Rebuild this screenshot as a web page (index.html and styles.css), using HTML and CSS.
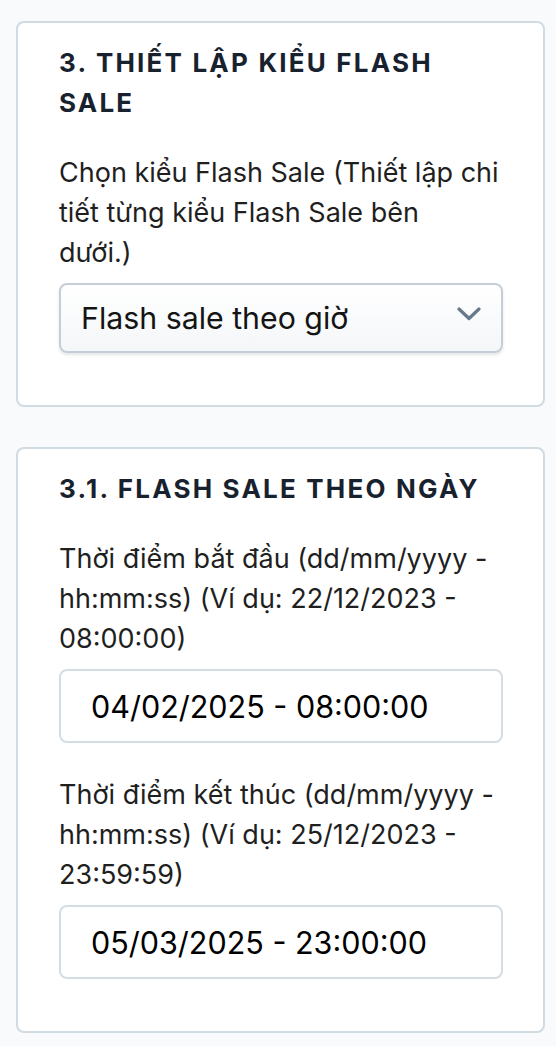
FILE: index.html
```html
<!DOCTYPE html>
<html lang="vi">
<head>
<meta charset="utf-8">
<title>Flash Sale</title>
<link rel="stylesheet" href="styles.css">
</head>
<body>
<main class="page">
  <section class="card">
    <h2 class="card-title">3. THIẾT LẬP KIỂU FLASH SALE</h2>
    <div class="field">
      <label class="field-label">Chọn kiểu Flash Sale (Thiết lập chi tiết từng kiểu Flash Sale bên<br>dưới.)</label>
      <div class="select">
        <span class="select-value">Flash sale theo giờ</span>
        <svg class="chevron" width="24" height="14" viewBox="0 0 24 14"><path d="M2 2 L12 11.5 L22 2" fill="none" stroke="#677889" stroke-width="3.2" stroke-linecap="round" stroke-linejoin="round"/></svg>
      </div>
    </div>
  </section>

  <section class="card">
    <h2 class="card-title">3.1. FLASH SALE THEO NGÀY</h2>
    <div class="field">
      <label class="field-label">Thời điểm bắt đầu (dd/mm/yyyy - hh:mm:ss) (Ví dụ: 22/12/2023 - 08:00:00)</label>
      <input class="text-input" type="text" value="04/02/2025 - 08:00:00">
    </div>
    <div class="field">
      <label class="field-label">Thời điểm kết thúc (dd/mm/yyyy - hh:mm:ss) (Ví dụ: 25/12/2023 - 23:59:59)</label>
      <input class="text-input" type="text" value="05/03/2025 - 23:00:00">
    </div>
  </section>
</main>
</body>
</html>
```

FILE: styles.css
```css
* { box-sizing: border-box; }

html, body {
  margin: 0;
  padding: 0;
  background: #f8fafc;
}

body {
  font-family: Inter, "Noto Sans", sans-serif;
  color: #1c1c1e;
}

.page {
  padding: 21px 11px 16px 16px;
  display: flex;
  flex-direction: column;
  gap: 40px;
}

.card {
  background: #ffffff;
  border: 2px solid #d1dbe2;
  border-radius: 8px;
  padding: 20px 40px 20px 41px;
  display: flex;
  flex-direction: column;
}

.card-title {
  margin: 0 0 30px;
  font-size: 26px;
  line-height: 40px;
  font-weight: 700;
  letter-spacing: 2.2px;
  color: #18222e;
}

.field {
  display: flex;
  flex-direction: column;
  margin-bottom: 32px;
}

.field-label {
  font-size: 27px;
  line-height: 40px;
  color: #1f1f1f;
  margin-bottom: 10px;
}

.select {
  height: 70px;
  border: 2px solid #c5ced7;
  border-radius: 8px;
  background: linear-gradient(#ffffff, #f4f6f8);
  box-shadow: 0 2px 3px rgba(30, 50, 70, 0.12);
  display: flex;
  align-items: center;
  justify-content: space-between;
  padding: 0 20px;
}

.select-value {
  font-size: 30.3px;
  color: #141414;
}

.chevron { margin-top: -8px; }

.text-input {
  height: 74px;
  border: 2px solid #d3dde4;
  border-radius: 8px;
  background: #ffffff;
  padding: 0 30px;
  font-family: Inter, "Noto Sans", sans-serif;
  font-size: 30.5px;
  color: #000;
  outline: none;
  width: 100%;
}
```
